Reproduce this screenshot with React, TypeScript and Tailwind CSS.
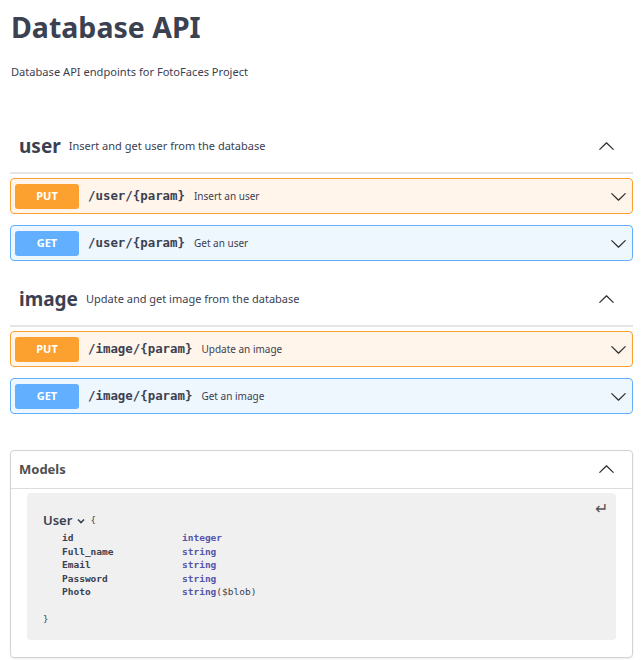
import React from "react";

const Arrow = ({ up = false, className = "" }: { up?: boolean; className?: string }) => (
  <svg
    viewBox="0 0 20 20"
    width="17"
    height="17"
    className={className}
    style={up ? { transform: "rotate(180deg)" } : undefined}
    fill="#303030"
  >
    <path d="M17.418 6.109c.272-.268.709-.268.979 0s.271.701 0 .969l-7.908 7.83c-.27.268-.707.268-.979 0l-7.908-7.83c-.27-.268-.27-.701 0-.969.271-.268.709-.268.979 0L10 13.25l7.418-7.141z" />
  </svg>
);

type Op = { method: "PUT" | "GET"; path: string; summary: string };

const OpRow = ({ op }: { op: Op }) => {
  const put = op.method === "PUT";
  return (
    <div
      className={`flex items-center h-[36px] rounded-[4px] border px-[4px] ${
        put ? "border-[#fca130] bg-[#fff5ea]" : "border-[#61affe] bg-[#eef6fe]"
      }`}
    >
      <div
        className={`w-[64px] h-[25px] rounded-[3px] flex items-center justify-center text-white text-[11px] font-bold ${
          put ? "bg-[#fca130]" : "bg-[#61affe]"
        }`}
      >
        {op.method}
      </div>
      <span className="ml-[9px] font-['DejaVu_Sans_Mono',monospace] font-bold text-[12.4px] text-[#3b4151]">
        {op.path}
      </span>
      <span className="ml-[9px] text-[10px] text-[#3b4151]">{op.summary}</span>
      <div className="ml-auto mr-[1px] flex items-center">
        <Arrow />
      </div>
    </div>
  );
};

const Tag = ({ name, desc, ops }: { name: string; desc: string; ops: Op[] }) => (
  <div>
    <div className="flex items-center h-[54px] border-b-2 border-[#e4e5e7] pl-[9px] pr-[18px]">
      <span className="text-[19px] font-bold text-[#3b4151] leading-none">{name}</span>
      <span className="ml-[8px] text-[11px] text-[#3b4151]">{desc}</span>
      <div className="ml-auto flex items-center">
        <Arrow up />
      </div>
    </div>
    <div className="flex flex-col gap-[11px] pt-[4px]">
      {ops.map((o, i) => (
        <OpRow key={i} op={o} />
      ))}
    </div>
  </div>
);

const props: [string, string, string?][] = [
  ["id", "integer"],
  ["Full_name", "string"],
  ["Email", "string"],
  ["Password", "string"],
  ["Photo", "string", "($blob)"],
];

export default function App() {
  return (
    <div className="w-[643px] h-[660px] bg-white overflow-hidden font-['Noto_Sans',sans-serif] text-[#3b4151]">
      <div className="px-[10px]">
        <h1 className="text-[28.5px] font-bold leading-[28px] pt-[13px] pl-px text-[#3b4151]">Database API</h1>
        <p className="text-[11.1px] leading-[15px] mt-[23px] pl-px text-[#3b4151]">
          Database API endpoints for FotoFaces Project
        </p>
        <div className="mt-[41px] flex flex-col gap-[12px]">
          <Tag
            name="user"
            desc="Insert and get user from the database"
            ops={[
              { method: "PUT", path: "/user/{param}", summary: "Insert an user" },
              { method: "GET", path: "/user/{param}", summary: "Get an user" },
            ]}
          />
          <Tag
            name="image"
            desc="Update and get image from the database"
            ops={[
              { method: "PUT", path: "/image/{param}", summary: "Update an image" },
              { method: "GET", path: "/image/{param}", summary: "Get an image" },
            ]}
          />
        </div>
        <div className="mt-[36px] border border-[#d3d3d3] rounded-[4px] h-[208px] shadow-[0_1px_2px_rgba(0,0,0,0.08)]">
          <div className="flex items-center h-[38px] border-b border-[#dcdcdc] pl-[8px] pr-[17px]">
            <span className="text-[13px] font-bold text-[#505050]">Models</span>
            <div className="ml-auto flex items-center">
              <Arrow up />
            </div>
          </div>
          <div className="mx-[16px] mt-[4px] h-[147px] rounded-[4px] bg-[#f0f0f0] relative pl-[16px] pt-[18px]">
            <span className="absolute right-[8px] top-[7px] text-[16px] text-[#555] leading-none">↵</span>
            <div className="flex items-center text-[#3b4151]">
              <span className="text-[13px] font-semibold leading-[18px]">User</span>
              <svg width="10" height="10" viewBox="0 0 10 10" className="ml-[4px] mt-[2px]">
                <path d="M2 3.5 L5 6.5 L8 3.5" stroke="#3b4151" strokeWidth="1.6" fill="none" />
              </svg>
              <span className="ml-[4px] text-[9px] font-['DejaVu_Sans_Mono',monospace] mt-[2px]">{"{"}</span>
            </div>
            <div className="mt-[2px] font-['DejaVu_Sans_Mono',monospace] text-[9.5px] font-bold leading-[13.5px]">
              {props.map(([n, t, f]) => (
                <div key={n} className="flex">
                  <span className="w-[139px] pl-[19px] text-[#3b4151]">{n}</span>
                  <span className="text-[#55a]">
                    {t}
                    {f && <span className="text-[#3b4151] font-normal">{f}</span>}
                  </span>
                </div>
              ))}
            </div>
            <div className="mt-[14px] font-['DejaVu_Sans_Mono',monospace] text-[9px] text-[#3b4151]">{"}"}</div>
          </div>
        </div>
      </div>
    </div>
  );
}
